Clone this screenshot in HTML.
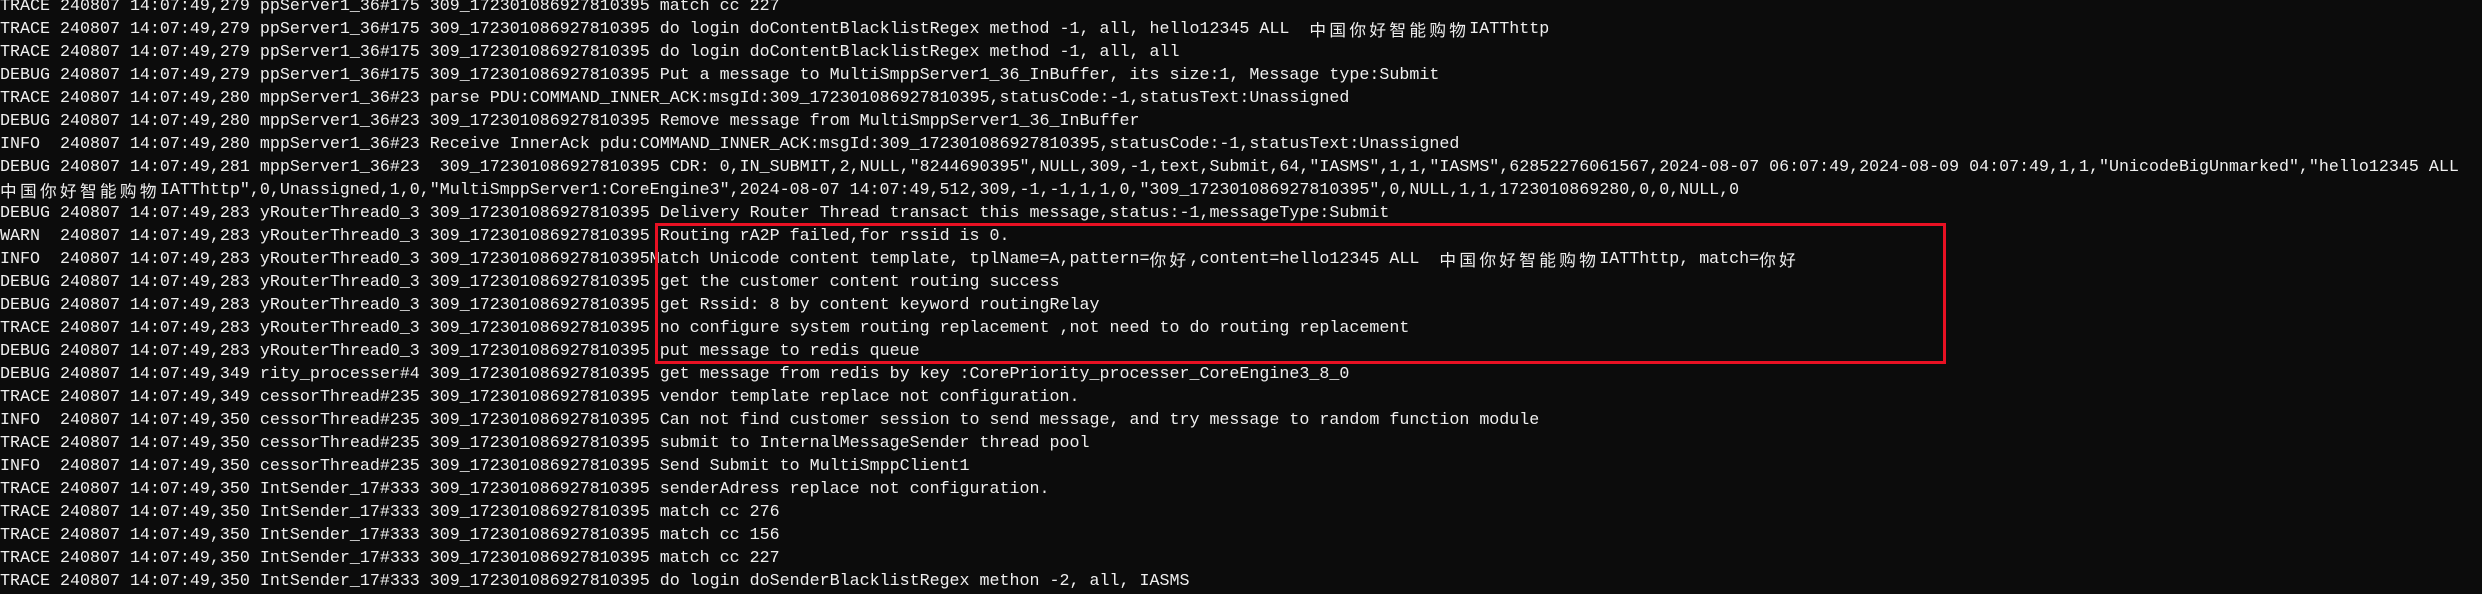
<!DOCTYPE html>
<html><head><meta charset="utf-8"><style>
html,body{margin:0;padding:0;background:#0c0c0c;width:2482px;height:594px;overflow:hidden}
pre{position:absolute;left:0;top:-5px;margin:0;font-family:"Liberation Mono",monospace;font-size:16.67px;line-height:23px;color:#f0f0f0;white-space:pre}
.c{font-family:"Noto Sans CJK SC",sans-serif;letter-spacing:3.33px;display:inline-block;height:23px;line-height:23px;vertical-align:top;overflow:visible}
.box{position:absolute;left:655px;top:223px;width:1285px;height:135px;border:3px solid #e81123}
</style></head><body>
<pre>TRACE 240807 14:07:49,279 ppServer1_36#175 309_172301086927810395 match cc 227
TRACE 240807 14:07:49,279 ppServer1_36#175 309_172301086927810395 do login doContentBlacklistRegex method -1, all, hello12345 ALL  <span class="c">中国你好智能购物</span>IATThttp
TRACE 240807 14:07:49,279 ppServer1_36#175 309_172301086927810395 do login doContentBlacklistRegex method -1, all, all
DEBUG 240807 14:07:49,279 ppServer1_36#175 309_172301086927810395 Put a message to MultiSmppServer1_36_InBuffer, its size:1, Message type:Submit
TRACE 240807 14:07:49,280 mppServer1_36#23 parse PDU:COMMAND_INNER_ACK:msgId:309_172301086927810395,statusCode:-1,statusText:Unassigned
DEBUG 240807 14:07:49,280 mppServer1_36#23 309_172301086927810395 Remove message from MultiSmppServer1_36_InBuffer
INFO  240807 14:07:49,280 mppServer1_36#23 Receive InnerAck pdu:COMMAND_INNER_ACK:msgId:309_172301086927810395,statusCode:-1,statusText:Unassigned
DEBUG 240807 14:07:49,281 mppServer1_36#23  309_172301086927810395 CDR: 0,IN_SUBMIT,2,NULL,"8244690395",NULL,309,-1,text,Submit,64,"IASMS",1,1,"IASMS",62852276061567,2024-08-07 06:07:49,2024-08-09 04:07:49,1,1,"UnicodeBigUnmarked","hello12345 ALL
<span class="c">中国你好智能购物</span>IATThttp",0,Unassigned,1,0,"MultiSmppServer1:CoreEngine3",2024-08-07 14:07:49,512,309,-1,-1,1,1,0,"309_172301086927810395",0,NULL,1,1,1723010869280,0,0,NULL,0
DEBUG 240807 14:07:49,283 yRouterThread0_3 309_172301086927810395 Delivery Router Thread transact this message,status:-1,messageType:Submit
WARN  240807 14:07:49,283 yRouterThread0_3 309_172301086927810395 Routing rA2P failed,for rssid is 0.
INFO  240807 14:07:49,283 yRouterThread0_3 309_172301086927810395Match Unicode content template, tplName=A,pattern=<span class="c">你好</span>,content=hello12345 ALL  <span class="c">中国你好智能购物</span>IATThttp, match=<span class="c">你好</span>
DEBUG 240807 14:07:49,283 yRouterThread0_3 309_172301086927810395 get the customer content routing success
DEBUG 240807 14:07:49,283 yRouterThread0_3 309_172301086927810395 get Rssid: 8 by content keyword routingRelay
TRACE 240807 14:07:49,283 yRouterThread0_3 309_172301086927810395 no configure system routing replacement ,not need to do routing replacement
DEBUG 240807 14:07:49,283 yRouterThread0_3 309_172301086927810395 put message to redis queue
DEBUG 240807 14:07:49,349 rity_processer#4 309_172301086927810395 get message from redis by key :CorePriority_processer_CoreEngine3_8_0
TRACE 240807 14:07:49,349 cessorThread#235 309_172301086927810395 vendor template replace not configuration.
INFO  240807 14:07:49,350 cessorThread#235 309_172301086927810395 Can not find customer session to send message, and try message to random function module
TRACE 240807 14:07:49,350 cessorThread#235 309_172301086927810395 submit to InternalMessageSender thread pool
INFO  240807 14:07:49,350 cessorThread#235 309_172301086927810395 Send Submit to MultiSmppClient1
TRACE 240807 14:07:49,350 IntSender_17#333 309_172301086927810395 senderAdress replace not configuration.
TRACE 240807 14:07:49,350 IntSender_17#333 309_172301086927810395 match cc 276
TRACE 240807 14:07:49,350 IntSender_17#333 309_172301086927810395 match cc 156
TRACE 240807 14:07:49,350 IntSender_17#333 309_172301086927810395 match cc 227
TRACE 240807 14:07:49,350 IntSender_17#333 309_172301086927810395 do login doSenderBlacklistRegex methon -2, all, IASMS</pre>
<div class="box"></div>
</body></html>
